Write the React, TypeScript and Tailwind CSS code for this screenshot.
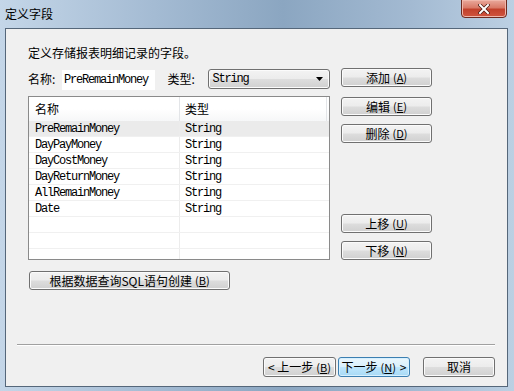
import React from "react";

const CN = "[font-family:'Noto_Sans_CJK_SC','Liberation_Sans',sans-serif]";
const MONO = "[font-family:'Liberation_Mono','DejaVu_Sans_Mono',monospace] text-[12px] tracking-[-1.2px]";

function Btn({ children, className = "" }: { children: React.ReactNode; className?: string }) {
  return (
    <div
      className={`flex items-center justify-center rounded-[3px] border border-[#707070] bg-[linear-gradient(#f3f3f3_0%,#ececec_48%,#dddddd_52%,#d0d0d0_100%)] shadow-[inset_0_0_0_1px_#fbfbfb] text-[12px] leading-none text-black ${CN} ${className}`}
    >
      {children}
    </div>
  );
}

function Mn({ k }: { k: string }) {
  return (
    <span className="ml-[3px] text-[11px]">
      (<span className="underline underline-offset-[1px]">{k}</span>)
    </span>
  );
}

const rows: [string, string][] = [
  ["PreRemainMoney", "String"],
  ["DayPayMoney", "String"],
  ["DayCostMoney", "String"],
  ["DayReturnMoney", "String"],
  ["AllRemainMoney", "String"],
  ["Date", "String"],
  ["", ""],
  ["", ""],
  ["", ""],
];

export default function App() {
  return (
    <div
      className={`w-[514px] h-[391px] flex flex-col overflow-hidden bg-[linear-gradient(90deg,#c4d6e8_0%,#a4bbd3_30%,#8ba6c1_55%,#a3bad2_80%,#bcd0e3_100%)] ${CN}`}
    >
      {/* Title bar */}
      <div className="h-[28px] flex items-start shrink-0">
        <div className="pl-[5px] pt-[7px] text-[12px] leading-[14px] text-black">定义字段</div>
        <div className="ml-auto mr-[7px] mt-[-1px] w-[46px] h-[19px] rounded-b-[4px] border border-[#6e2b20] bg-[linear-gradient(#e9a99c_0%,#d97a68_45%,#c2412c_55%,#d0553f_100%)] shadow-[inset_0_0_0_1px_#f0b7ab] flex items-center justify-center">
          <svg width="12" height="10" viewBox="0 0 12 10">
            <path d="M2 1 L10 9 M10 1 L2 9" stroke="#4a1a12" strokeWidth="3.4" strokeLinecap="square" />
            <path d="M2 1 L10 9 M10 1 L2 9" stroke="#ffffff" strokeWidth="2" strokeLinecap="square" />
          </svg>
        </div>
      </div>

      {/* Content */}
      <div className="ml-[5px] mr-[6px] mb-[4px] flex-1 border border-[#55677a] bg-[#f0f0f0] flex flex-col">
        <div className="pl-[22px] pt-[16px] text-[12px] leading-[16px] text-black">定义存储报表明细记录的字段。</div>

        <div className="mt-[7px] pl-[22px] flex">
          {/* left column */}
          <div className="w-[302px] flex flex-col">
            <div className="h-[21px] flex items-center text-[12px] text-black">
              <div className="w-[34px]">名称:</div>
              <div className={`w-[93px] h-[20px] mt-[2px] bg-white flex items-center pl-[2px] ${MONO}`}>PreRemainMoney</div>
              <div className="ml-[13px] w-[41px]">类型:</div>
              <div className="w-[122px] h-[20px] rounded-[3px] border border-[#707070] bg-[linear-gradient(#f3f3f3_0%,#ececec_48%,#dddddd_52%,#d0d0d0_100%)] shadow-[inset_0_0_0_1px_#fbfbfb] flex items-center pl-[3px] pr-[6px]">
                <span className={MONO}>String</span>
                <svg className="ml-auto" width="7" height="4" viewBox="0 0 7 4">
                  <path d="M0 0 H7 L3.5 4 Z" fill="#000" />
                </svg>
              </div>
            </div>

            {/* table */}
            <div className="mt-[7px] h-[164px] border border-[#8a8a8a] bg-white flex flex-col overflow-hidden">
              <div className="h-[24px] shrink-0 flex bg-[linear-gradient(#ffffff_0%,#ffffff_50%,#f6f7f8_100%)] text-[12px] text-black">
                <div className="w-[151px] border-r border-[#e3e5e8] flex items-center pl-[6px]">名称</div>
                <div className="w-[147px] border-r border-[#e3e5e8] flex items-center pl-[5px]">类型</div>
              </div>
              {rows.map(([n, t], i) => (
                <div
                  key={i}
                  className={`h-[16px] shrink-0 flex border-b border-[#f0f0f0] ${i === 0 ? "bg-[#ebebeb]" : ""}`}
                >
                  <div className={`w-[151px] border-r border-[#ececec] pl-[6px] leading-[17px] text-black ${MONO}`}>{n}</div>
                  <div className={`w-[147px] pl-[5px] leading-[17px] text-black ${MONO}`}>{t}</div>
                </div>
              ))}
            </div>

            <Btn className="mt-[11px] ml-[1px] w-[201px] h-[19px]">
              根据数据查询SQL语句创建<Mn k="B" />
            </Btn>
          </div>

          {/* right column */}
          <div className="ml-[11px] w-[91px] flex flex-col">
            <Btn className="h-[19px]">添加<Mn k="A" /></Btn>
            <Btn className="mt-[10px] h-[19px]">编辑<Mn k="E" /></Btn>
            <Btn className="mt-[8px] h-[19px]">删除<Mn k="D" /></Btn>
            <Btn className="mt-[71px] h-[19px]">上移<Mn k="U" /></Btn>
            <Btn className="mt-[8px] h-[19px]">下移<Mn k="N" /></Btn>
          </div>
        </div>

        <div className="mt-[54px] ml-[11px] w-[478px] border-t border-[#a0a0a0] border-b border-b-white" />

        <div className="mt-[11px] flex justify-end pr-[12px]">
          <Btn className="w-[73px] h-[20px]">&lt; 上一步<Mn k="B" /></Btn>
          <div className="ml-[2px] w-[72px] h-[20px] rounded-[3px] border border-[#3c7fb1] bg-[linear-gradient(#eaf6fd_0%,#d9f0fc_48%,#bee6fd_52%,#a7d9f5_100%)] shadow-[inset_0_0_0_1px_#d6f0ff] flex items-center justify-center text-[12px] leading-none text-black">
            下一步<Mn k="N" /><span className="ml-[4px]">&gt;</span>
          </div>
          <Btn className="ml-[13px] w-[72px] h-[20px]">取消</Btn>
        </div>
      </div>
    </div>
  );
}
